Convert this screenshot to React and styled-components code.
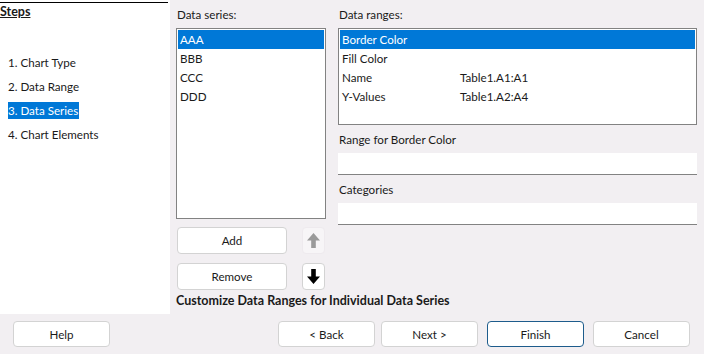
import React from "react";
import styled, { createGlobalStyle } from "styled-components";

const GlobalStyle = createGlobalStyle`
  body {
    margin: 0;
    background: #f2eff2;
    font-family: Lato, "Noto Sans", sans-serif;
    font-size: 11.6px;
    color: #1a1a1a;
  }
`;

const steps = ["1. Chart Type", "2. Data Range", "3. Data Series", "4. Chart Elements"];
const series = ["AAA", "BBB", "CCC", "DDD"];
const ranges = [
  ["Border Color", ""],
  ["Fill Color", ""],
  ["Name", "Table1.A1:A1"],
  ["Y-Values", "Table1.A2:A4"],
];

function App() {
  return (
    <>
      <GlobalStyle />
      <Dialog>
        <Main>
          <Side>
            <StepsTitle>Steps</StepsTitle>
            <StepList>
              {steps.map((s, i) => (
                <Step key={s} active={i === 2}>{s}</Step>
              ))}
            </StepList>
          </Side>
          <Content>
            <Columns>
              <SeriesCol>
                <Label>Data series:</Label>
                <ListBox>
                  {series.map((s, i) => (
                    <Row key={s} selected={i === 0}>{s}</Row>
                  ))}
                </ListBox>
                <ButtonRow>
                  <SmallButton>Add</SmallButton>
                  <ArrowButton disabled>
                    <svg width="15" height="17" viewBox="0 0 15 17">
                      <path d="M7.5 1 L14 8.5 L9.8 8.5 L9.8 16 L5.2 16 L5.2 8.5 L1 8.5 Z" fill="#9a9a9a" />
                    </svg>
                  </ArrowButton>
                </ButtonRow>
                <ButtonRow>
                  <SmallButton>Remove</SmallButton>
                  <ArrowButton>
                    <svg width="15" height="17" viewBox="0 0 15 17">
                      <path d="M7.5 16 L14 8.5 L9.8 8.5 L9.8 1 L5.2 1 L5.2 8.5 L1 8.5 Z" fill="#000" />
                    </svg>
                  </ArrowButton>
                </ButtonRow>
              </SeriesCol>
              <RangeCol>
                <Label>Data ranges:</Label>
                <RangeBox>
                  {ranges.map(([a, b], i) => (
                    <Row key={a} selected={i === 0}>
                      <Cell>{a}</Cell>
                      <span>{b}</span>
                    </Row>
                  ))}
                </RangeBox>
                <FieldLabel>Range for Border Color</FieldLabel>
                <Field />
                <FieldLabel>Categories</FieldLabel>
                <Field />
              </RangeCol>
            </Columns>
            <Caption>Customize Data Ranges for Individual Data Series</Caption>
          </Content>
        </Main>
        <Footer>
          <DlgButton>Help</DlgButton>
          <Spacer />
          <DlgButton>&lt; Back</DlgButton>
          <DlgButton>Next &gt;</DlgButton>
          <DlgButton primary>Finish</DlgButton>
          <DlgButton>Cancel</DlgButton>
        </Footer>
      </Dialog>
    </>
  );
}

const Dialog = styled.div`
  width: 704px;
  height: 354px;
  display: flex;
  flex-direction: column;
  overflow: hidden;
`;

const Main = styled.div`
  display: flex;
  height: 314px;
`;

const Side = styled.div`
  width: 170px;
  background: #fff;
  padding-top: 2px;
  box-sizing: border-box;
`;

const StepsTitle = styled.div`
  width: 168px;
  border-top: 1px solid #000;
  font-weight: 700;
  font-size: 12.5px;
  text-decoration: underline;
  line-height: 17px;
`;

const StepList = styled.div`
  margin-top: 34px;
  padding-left: 8px;
  display: flex;
  flex-direction: column;
  align-items: flex-start;
  gap: 7px;
`;

const Step = styled.div`
  line-height: 17px;
  padding: 0 1px 0 0;
  background: ${(p) => (p.active ? "#0078d7" : "transparent")};
  color: ${(p) => (p.active ? "#fff" : "#1a1a1a")};
`;

const Content = styled.div`
  flex: 1;
  padding: 6px 7px 0 6px;
  display: flex;
  flex-direction: column;
`;

const Columns = styled.div`
  display: flex;
  gap: 12px;
`;

const SeriesCol = styled.div`
  width: 150px;
  display: flex;
  flex-direction: column;
`;

const RangeCol = styled.div`
  flex: 1;
  display: flex;
  flex-direction: column;
`;

const Label = styled.div`
  line-height: 17px;
  padding-left: 1px;
  margin-bottom: 5px;
`;

const ListBox = styled.div`
  height: 191px;
  box-sizing: border-box;
  background: #fff;
  border: 1px solid #828282;
  padding: 1px;
`;

const RangeBox = styled(ListBox)`
  height: 97px;
`;

const Row = styled.div`
  display: flex;
  height: 19px;
  line-height: 19px;
  padding-left: 2px;
  background: ${(p) => (p.selected ? "#0078d7" : "transparent")};
  color: ${(p) => (p.selected ? "#fff" : "#1a1a1a")};
`;

const Cell = styled.span`
  width: 118px;
`;

const FieldLabel = styled.div`
  line-height: 17px;
  margin-top: 6px;
  margin-bottom: 5px;
  padding-left: 1px;
`;

const Field = styled.div`
  height: 21px;
  background: #fff;
  border-bottom: 1px solid #828282;
`;

const ButtonRow = styled.div`
  display: flex;
  justify-content: space-between;
  align-items: center;
  margin-top: 8px;
  & + & {
    margin-top: 9px;
  }
`;

const SmallButton = styled.button`
  width: 110px;
  height: 27px;
  margin-left: 1px;
  background: #fff;
  border: 1px solid #d3d3d3;
  border-radius: 4px;
  font: inherit;
  color: #1a1a1a;
`;

const ArrowButton = styled.button`
  width: 23px;
  height: 27px;
  margin-right: 1px;
  padding: 0;
  display: flex;
  align-items: center;
  justify-content: center;
  background: ${(p) => (p.disabled ? "#f7f5f7" : "#fff")};
  border: 1px solid ${(p) => (p.disabled ? "#eeeaee" : "#d3d3d3")};
  border-radius: 4px;
`;

const Caption = styled.div`
  margin-top: 2px;
  font-weight: 700;
  font-size: 12.5px;
  line-height: 17px;
`;

const Footer = styled.div`
  flex: 1;
  display: flex;
  align-items: center;
  padding: 0 14px 0 13px;
  gap: 6px;
`;

const Spacer = styled.div`
  flex: 1;
`;

const DlgButton = styled.button`
  width: 97px;
  height: 26px;
  margin-right: ${(p) => (p.primary ? "3px" : "0")};
  margin-left: ${(p) => (p.primary ? "3px" : "0")};
  background: #fff;
  border: 1px solid ${(p) => (p.primary ? "#1d5c8c" : "#d3d3d3")};
  border-radius: 4px;
  font: inherit;
  color: #1a1a1a;
`;

export default App;
